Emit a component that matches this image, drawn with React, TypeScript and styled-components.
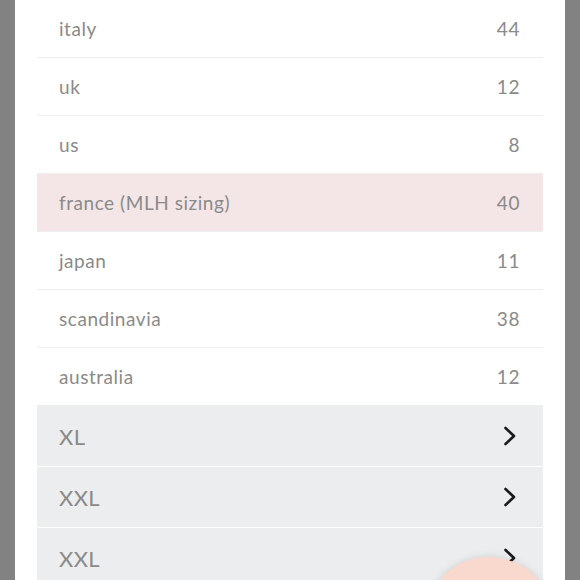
import React from 'react'
import styled, {createGlobalStyle} from 'styled-components'

// -------------------------------------------------------------
// Data.
// -------------------------------------------------------------

const countries = [
  {name: 'italy', size: '44'},
  {name: 'uk', size: '12'},
  {name: 'us', size: '8'},
  {name: 'france (MLH sizing)', size: '40', active: true},
  {name: 'japan', size: '11'},
  {name: 'scandinavia', size: '38'},
  {name: 'australia', size: '12'}
]

const sizes = ['XL', 'XXL', 'XXL']

// -------------------------------------------------------------
// Components.
// -------------------------------------------------------------

const GlobalStyle = createGlobalStyle`
  html, body {
    margin: 0;
    padding: 0;
    height: 100%;
    overflow: hidden;
    background: #828282;
  }

  body {
    font-family: Lato, 'Open Sans', sans-serif;
  }
`

const Page = styled.div`
  display: flex;
  justify-content: center;

  height: 580px;
  padding: 0 15px;
  box-sizing: border-box;
`

const Sheet = styled.div`
  position: relative;
  flex: 1;

  padding: 0 22px;

  background: #fff;
  overflow: hidden;
`

const List = styled.ul`
  margin: -1px 0 0;
  padding: 0;

  list-style: none;
  border-top: 1px solid #eeeeee;
`

const Row = styled.li<{$active?: boolean}>`
  display: flex;
  align-items: center;
  justify-content: space-between;

  height: 57px;
  padding: 0 23px 0 22px;

  color: #8a8a8a;
  background: ${p => (p.$active ? '#f4e6e7' : 'transparent')};
  border-bottom: 1px solid #eeeeee;

  font-size: 19px;
  letter-spacing: 0.55px;
`

const SizeList = styled.ul`
  display: flex;
  flex-direction: column;
  gap: 1px;

  margin: 0;
  padding: 0;

  list-style: none;
`

const SizeRow = styled.li`
  display: flex;
  align-items: center;
  justify-content: space-between;

  height: 60px;
  padding: 0 26px 0 22px;

  color: #8a8a8a;
  background: #ecedee;

  font-size: 22px;
  letter-spacing: 0.4px;
`

const Fab = styled.div`
  position: absolute;
  left: 410px;
  top: 557px;

  width: 128px;
  height: 128px;

  background: #f9d8cd;
  border-radius: 50%;
  box-shadow: 0 0 8px rgba(0, 0, 0, 0.12);
`

const Chevron = () => (
  <svg width="14" height="20" viewBox="0 0 14 20">
    <path
      d="M2.5 2 L11 10 L2.5 18"
      fill="none"
      stroke="#1a1a1a"
      strokeWidth="2.6"
      strokeLinecap="round"
      strokeLinejoin="round"
    />
  </svg>
)

// -------------------------------------------------------------
// Export.
// -------------------------------------------------------------

export default function App() {
  return (
    <>
      <GlobalStyle />
      <Page>
        <Sheet>
          <List>
            {countries.map(c => (
              <Row key={c.name} $active={c.active}>
                <span>{c.name}</span>
                <span>{c.size}</span>
              </Row>
            ))}
          </List>
          <SizeList>
            {sizes.map((s, i) => (
              <SizeRow key={i}>
                <span>{s}</span>
                <Chevron />
              </SizeRow>
            ))}
          </SizeList>
          <Fab />
        </Sheet>
      </Page>
    </>
  )
}
